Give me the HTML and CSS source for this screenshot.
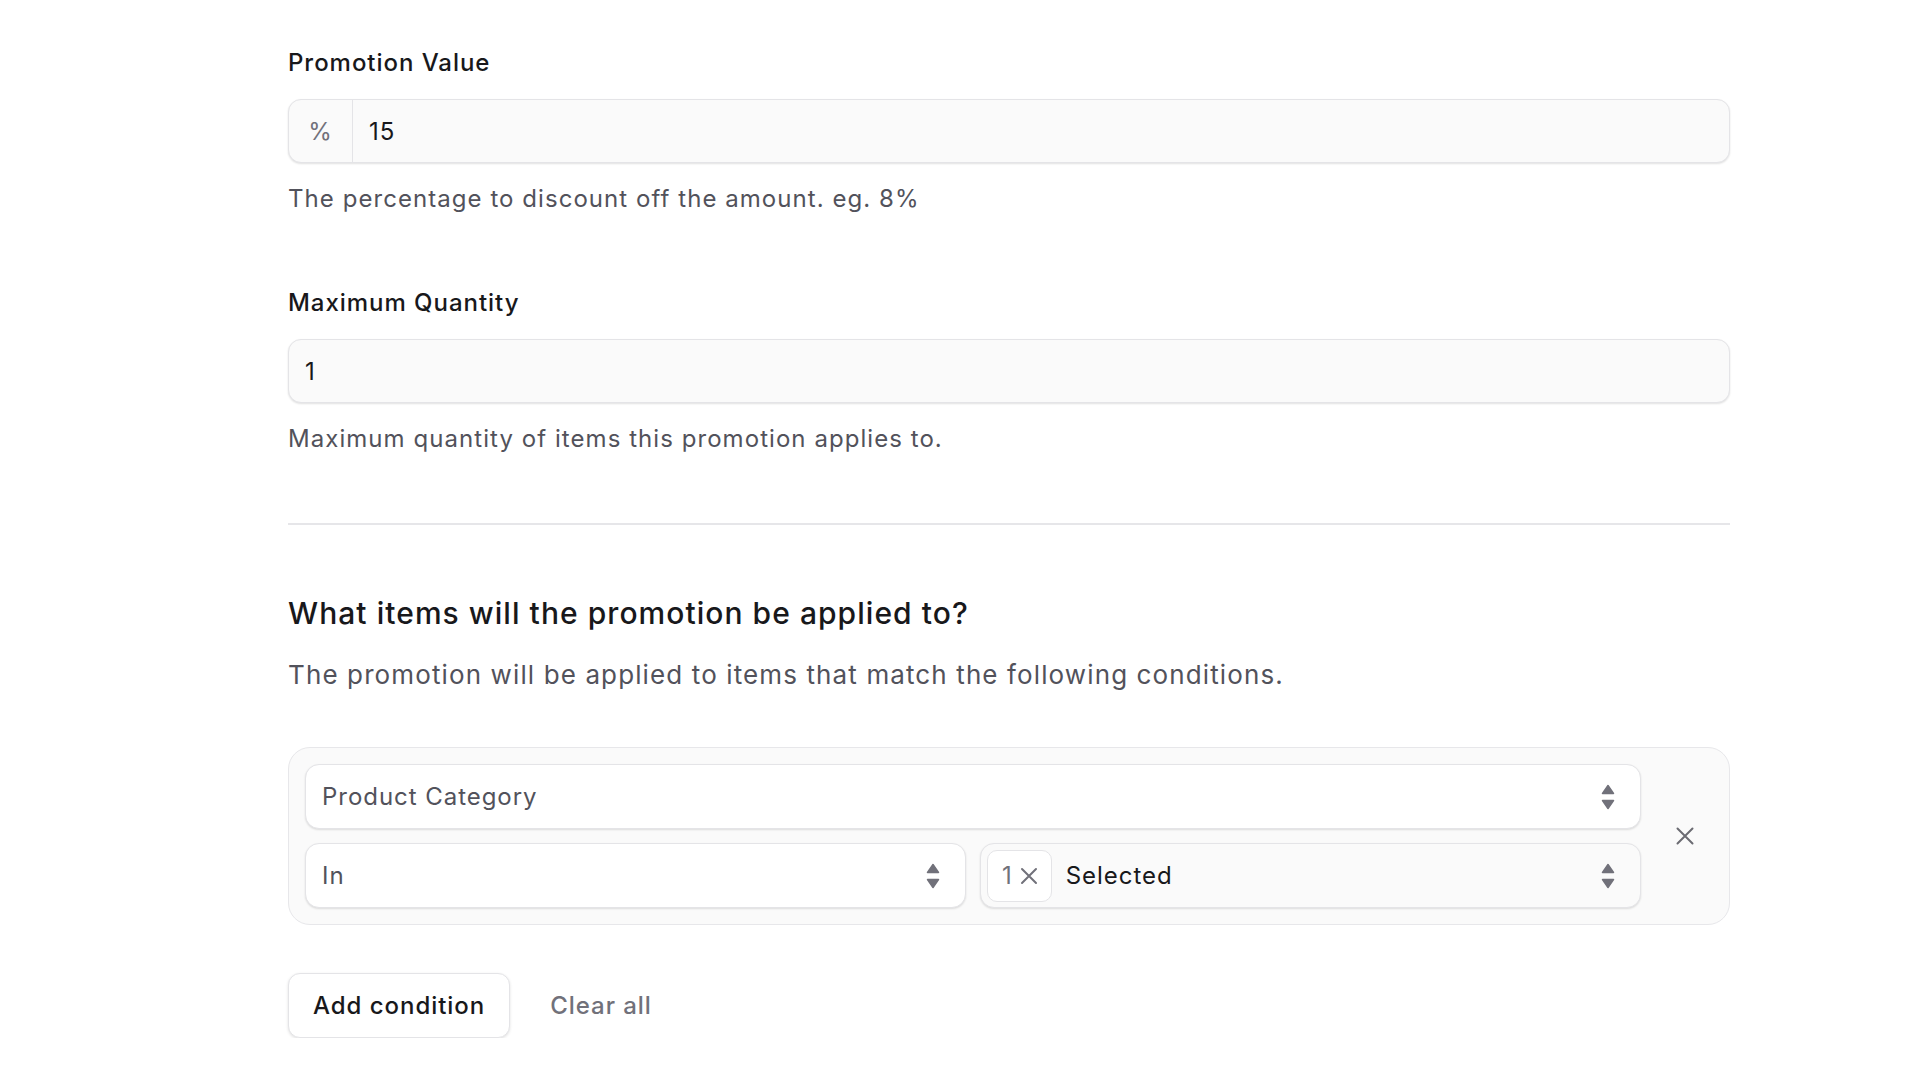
FILE: index.html
```html
<!DOCTYPE html>
<html lang="en">
<head>
<meta charset="utf-8">
<title>Promotion</title>
<link rel="stylesheet" href="styles.css">
</head>
<body>
<main class="page">
  <section class="field">
    <label class="label">Promotion Value</label>
    <div class="input input-prefixed">
      <span class="prefix">%</span>
      <span class="value">15</span>
    </div>
    <p class="hint">The percentage to discount off the amount. eg. 8%</p>
  </section>

  <section class="field field-second">
    <label class="label">Maximum Quantity</label>
    <div class="input">
      <span class="value">1</span>
    </div>
    <p class="hint">Maximum quantity of items this promotion applies to.</p>
  </section>

  <hr class="divider">

  <h2 class="heading">What items will the promotion be applied to?</h2>
  <p class="desc">The promotion will be applied to items that match the following conditions.</p>

  <div class="condition">
    <div class="condition-fields">
      <div class="select">
        <span class="select-text">Product Category</span>
        <svg class="stepper" width="14" height="26" viewBox="0 0 14 26"><path d="M7 1.5 L12.5 9.5 L1.5 9.5 Z" fill="#71717a" stroke="#71717a" stroke-width="1.5" stroke-linejoin="round"/><path d="M1.5 16.5 L12.5 16.5 L7 24.5 Z" fill="#71717a" stroke="#71717a" stroke-width="1.5" stroke-linejoin="round"/></svg>
      </div>
      <div class="row">
        <div class="select">
          <span class="select-text">In</span>
          <svg class="stepper" width="14" height="26" viewBox="0 0 14 26"><path d="M7 1.5 L12.5 9.5 L1.5 9.5 Z" fill="#71717a" stroke="#71717a" stroke-width="1.5" stroke-linejoin="round"/><path d="M1.5 16.5 L12.5 16.5 L7 24.5 Z" fill="#71717a" stroke="#71717a" stroke-width="1.5" stroke-linejoin="round"/></svg>
        </div>
        <div class="select select-multi">
          <span class="chip">1
            <svg width="18" height="18" viewBox="0 0 18 18"><path d="M2 2 L16 16 M16 2 L2 16" stroke="#71717a" stroke-width="2" stroke-linecap="round"/></svg>
          </span>
          <span class="select-text select-strong">Selected</span>
          <svg class="stepper" width="14" height="26" viewBox="0 0 14 26"><path d="M7 1.5 L12.5 9.5 L1.5 9.5 Z" fill="#71717a" stroke="#71717a" stroke-width="1.5" stroke-linejoin="round"/><path d="M1.5 16.5 L12.5 16.5 L7 24.5 Z" fill="#71717a" stroke="#71717a" stroke-width="1.5" stroke-linejoin="round"/></svg>
        </div>
      </div>
    </div>
    <button class="remove" type="button" aria-label="Remove">
      <svg width="18" height="18" viewBox="0 0 18 18"><path d="M1.5 1.5 L16.5 16.5 M16.5 1.5 L1.5 16.5" stroke="#6b6b72" stroke-width="2" stroke-linecap="round"/></svg>
    </button>
  </div>

  <div class="actions">
    <button class="btn" type="button">Add condition</button>
    <button class="btn-link" type="button">Clear all</button>
  </div>
</main>
</body>
</html>
```

FILE: styles.css
```css
* { box-sizing: border-box; }

body {
  margin: 0;
  background: #ffffff;
  font-family: Inter, "Noto Sans", sans-serif;
  letter-spacing: 0.06em;
  color: #18181b;
}

.page {
  width: 1442px;
  margin-left: 288px;
  padding-top: 47px;
  display: flex;
  flex-direction: column;
}

.field {
  display: flex;
  flex-direction: column;
  gap: 20px;
}

.field-second { margin-top: 72px; }

.label {
  font-size: 24px;
  line-height: 32px;
  font-weight: 500;
  color: #18181b;
}

.input {
  height: 64px;
  background: #fafafa;
  border: 1px solid #e4e4e7;
  border-radius: 13px;
  box-shadow: 0 1px 2px rgba(0, 0, 0, 0.12);
  display: flex;
  align-items: center;
  padding: 0 16px;
  font-size: 24px;
  color: #18181b;
}

.input-prefixed { padding: 0; }

.prefix {
  width: 64px;
  height: 100%;
  display: flex;
  align-items: center;
  justify-content: center;
  border-right: 1px solid #e4e4e7;
  color: #71717a;
  font-size: 24px;
}

.input-prefixed .value { padding-left: 16px; }

.hint {
  margin: 0;
  font-size: 24px;
  line-height: 32px;
  letter-spacing: 0.044em;
  color: #52525b;
}

.divider {
  margin: 68px 0 0;
  border: 0;
  height: 2px;
  background: #e6e6e9;
}

.heading {
  margin: 70px 0 0;
  font-size: 30px;
  line-height: 36px;
  font-weight: 500;
  letter-spacing: 0.035em;
  color: #18181b;
}

.desc {
  margin: 28px 0 0;
  font-size: 26px;
  line-height: 32px;
  letter-spacing: 0.043em;
  color: #52525b;
}

.condition {
  margin-top: 56px;
  background: #fafafa;
  border: 1px solid #e7e7ea;
  border-radius: 22px;
  padding: 16px;
  display: grid;
  grid-template-columns: 1fr 56px;
  gap: 16px;
  align-items: center;
}

.condition-fields {
  display: flex;
  flex-direction: column;
  gap: 14px;
}

.row {
  display: grid;
  grid-template-columns: 1fr 1fr;
  gap: 14px;
}

.select {
  height: 65px;
  background: #ffffff;
  border: 1px solid #e4e4e7;
  border-radius: 14px;
  box-shadow: 0 1px 2px rgba(0, 0, 0, 0.12);
  display: flex;
  align-items: center;
  padding: 0 25px 0 16px;
  gap: 14px;
}

.select-text {
  flex: 1;
  font-size: 24px;
  color: #52525b;
}

.select-strong { color: #18181b; }

.select-multi {
  background: #fafafa;
  padding-left: 6px;
}

.chip {
  height: 52px;
  background: #ffffff;
  border: 1px solid #e4e4e7;
  border-radius: 10px;
  display: flex;
  align-items: center;
  gap: 8px;
  padding: 0 13px 0 14px;
  font-size: 24px;
  letter-spacing: 0;
  color: #71717a;
}

.stepper { flex: none; }

.remove {
  justify-self: center;
  width: 40px;
  height: 40px;
  border: 0;
  background: transparent;
  padding: 0;
  display: flex;
  align-items: center;
  justify-content: center;
  cursor: pointer;
}

.actions {
  margin-top: 48px;
  display: flex;
  align-items: center;
  gap: 16px;
}

.btn {
  height: 65px;
  padding: 0 24px;
  background: #ffffff;
  border: 1px solid #e4e4e7;
  border-radius: 12px;
  box-shadow: 0 1px 3px rgba(0, 0, 0, 0.12);
  font-family: Inter, "Noto Sans", sans-serif;
  font-size: 24px;
  font-weight: 500;
  letter-spacing: 0.04em;
  color: #18181b;
}

.btn-link {
  height: 65px;
  padding: 0 24px;
  background: transparent;
  border: 0;
  font-family: Inter, "Noto Sans", sans-serif;
  font-size: 24px;
  font-weight: 500;
  letter-spacing: 0.04em;
  color: #71717a;
}
```
